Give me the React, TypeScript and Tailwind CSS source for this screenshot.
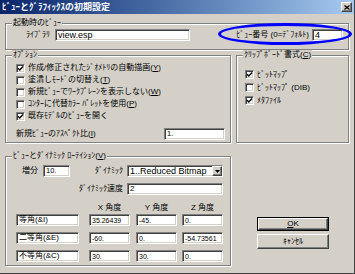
import { ReactNode } from "react";

const sunken =
    "bg-white border border-t-[#808080] border-l-[#808080] border-r-white border-b-white shadow-[inset_1px_1px_0_#404040,inset_-1px_-1px_0_#d4d0c8]";
const raised =
    "bg-[#d4d0c8] border border-t-white border-l-white border-r-[#404040] border-b-[#404040] shadow-[inset_-1px_-1px_0_#808080]";
const frame =
    "border border-[#808080] shadow-[inset_1px_1px_0_#fff,1px_1px_0_#fff] min-w-0";

function Box({ className = "", children }: { className?: string; children?: ReactNode }) {
    return (
        <div className={`${sunken} h-[12px] flex items-center pl-[2px] leading-none overflow-hidden whitespace-nowrap ${className}`}>
            {children}
        </div>
    );
}

function Check({ on }: { on: boolean }) {
    return (
        <div className={`${sunken} w-[9px] h-[9px] shrink-0 flex items-center justify-center`}>
            {on && (
                <svg width="7" height="7" viewBox="0 0 7 7">
                    <path d="M1 3.2 L2.8 5 L6 1.6" stroke="#000" strokeWidth="1.4" fill="none" />
                </svg>
            )}
        </div>
    );
}

function Legend({ children }: { children: ReactNode }) {
    return <legend className="ml-[6px] px-[1px] bg-[#d4d0c8] text-[8px] leading-[10px]">{children}</legend>;
}

function Opt({ on, children, h = "h-[12px]" }: { on: boolean; children: ReactNode; h?: string }) {
    return (
        <div className={`flex items-center ${h}`}>
            <Check on={on} />
            <span className="ml-[3px] whitespace-nowrap">{children}</span>
        </div>
    );
}

const rows = [
    { label: "等角(&I)", x: "35.26439", y: "-45.", z: "0." },
    { label: "二等角(&E)", x: "-60.", y: "0.", z: "-54.73561" },
    { label: "不等角(&C)", x: "30.", y: "30.", z: "0." },
];

export default function App() {
    return (
        <div className="relative w-[355px] h-[274px] overflow-hidden bg-[#d4d0c8] flex flex-col border-r border-b border-[#404040] text-black text-[8px] leading-[10px] font-['Liberation_Sans','Noto_Sans_CJK_JP',sans-serif]">
            {/* title bar */}
            <div className="h-[14px] shrink-0 flex items-center bg-linear-to-r from-[#0a246a] to-[#a6caf0]">
                <span className="pl-[2px] text-white font-bold text-[9px] whitespace-nowrap">
                    ﾋﾞｭｰとｸﾞﾗﾌｨｯｸｽの初期設定
                </span>
                <div className={`ml-auto mr-[2px] w-[11px] h-[10px] ${raised} flex items-center justify-center`}>
                    <svg width="6" height="5" viewBox="0 0 6 5">
                        <path d="M0.5 0.5 L5.5 4.5 M5.5 0.5 L0.5 4.5" stroke="#000" strokeWidth="1.3" />
                    </svg>
                </div>
            </div>

            <div className="flex-1 flex flex-col pl-[5px] pr-[5px] pt-[4px]">
                <fieldset className={frame}>
                    <Legend>起動時のﾋﾞｭｰ</Legend>
                    <div className="flex items-center pt-[1px] pb-[8px] pl-[20px] pr-[5px]">
                        <span>ﾗｲﾌﾞﾗﾘ</span>
                        <Box className="ml-[5px] w-[135px] text-[9px]">view.esp</Box>
                        <span className="ml-auto whitespace-nowrap">ﾋﾞｭｰ番号 (0=ﾃﾞﾌｫﾙﾄ)</span>
                        <Box className="ml-[3px] w-[31px] text-[9px]">4</Box>
                    </div>
                </fieldset>

                <div className="flex gap-[5px]">
                    <fieldset className={`${frame} w-[226px] shrink-0`}>
                        <Legend>ｵﾌﾟｼｮﾝ</Legend>
                        <div className="flex flex-col pt-[2px] pb-[2px] pl-[10px]">
                            <Opt on>
                                作成/修正されたｼﾞｵﾒﾄﾘの自動描画(<span className="underline">Y</span>)
                            </Opt>
                            <Opt on={false}>
                                塗潰しﾓｰﾄﾞの切替え(<span className="underline">T</span>)
                            </Opt>
                            <Opt on={false}>
                                新規ﾋﾞｭｰでﾜｰｸﾌﾟﾚｰﾝを表示しない(<span className="underline">W</span>)
                            </Opt>
                            <Opt on={false}>
                                ｺﾝﾀｰに代替ｶﾗｰ ﾊﾟﾚｯﾄを使用(<span className="underline">P</span>)
                            </Opt>
                            <Opt on>既存ﾓﾃﾞﾙのﾋﾞｭｰを開く</Opt>
                            <div className="flex items-center h-[12px] mt-[6px]">
                                <span className="whitespace-nowrap">
                                    新規ﾋﾞｭｰのｱｽﾍﾟｸﾄ比(<span className="underline">I</span>)
                                </span>
                                <Box className="ml-auto mr-[5px] w-[61px] h-[11px] text-[7.5px]">1.</Box>
                            </div>
                        </div>
                    </fieldset>

                    <fieldset className={`${frame} flex-1`}>
                        <Legend>
                            ｸﾘｯﾌﾟﾎﾞｰﾄﾞ書式(<span className="underline">C</span>)
                        </Legend>
                        <div className="flex flex-col pt-[8px] pl-[8px]">
                            <Opt on h="h-[13px]">ﾋﾞｯﾄﾏｯﾌﾟ</Opt>
                            <Opt on={false} h="h-[13px]">ﾋﾞｯﾄﾏｯﾌﾟ (DIB)</Opt>
                            <Opt on h="h-[13px]">ﾒﾀﾌｧｲﾙ</Opt>
                        </div>
                    </fieldset>
                </div>

                <div className="flex mt-[8px]">
                    <fieldset className={`${frame} w-[226px] shrink-0`}>
                        <Legend>
                            ﾋﾞｭｰとﾀﾞｲﾅﾐｯｸ ﾛｰﾃｲｼｮﾝ(<span className="underline">V</span>)
                        </Legend>
                        <div className="flex flex-col pt-[4px] pb-[3px]">
                            <div className="flex items-center h-[12px]">
                                <span className="ml-[16px] w-[21px]">増分</span>
                                <Box className="w-[27px] text-[7.5px]">10.</Box>
                                <span className="w-[55px] text-right pr-[2px]">ﾀﾞｲﾅﾐｯｸ</span>
                                <div className={`${sunken} ml-[2px] w-[96px] h-[12px] flex items-center`}>
                                    <span className="pl-[2px] text-[9px] leading-none flex-1 whitespace-nowrap">
                                        1..Reduced Bitmap
                                    </span>
                                    <div className={`${raised} w-[10px] h-full flex items-center justify-center`}>
                                        <svg width="5" height="3" viewBox="0 0 5 3">
                                            <path d="M0 0 L5 0 L2.5 3 Z" fill="#000" />
                                        </svg>
                                    </div>
                                </div>
                            </div>
                            <div className="flex items-center h-[12px] mt-[6px]">
                                <span className="w-[119px] text-right pr-[2px] whitespace-nowrap">ﾀﾞｲﾅﾐｯｸ速度</span>
                                <Box className="ml-[2px] w-[96px] text-[8px]">2</Box>
                            </div>
                            <div className="flex items-center h-[10px] mt-[8px] pl-[10px]">
                                <span className="w-[63px]" />
                                <span className="ml-[10px] w-[41px] text-center">X 角度</span>
                                <span className="ml-[6px] w-[41px] text-center">Y 角度</span>
                                <span className="ml-[5px] w-[41px] text-center">Z 角度</span>
                            </div>
                            {rows.map((r, i) => (
                                <div key={r.label} className={`flex items-center pl-[10px] ${i === 0 ? "mt-[1px]" : "mt-[6px]"}`}>
                                    <Box className="w-[63px] text-[8px]">{r.label}</Box>
                                    <Box className="ml-[10px] w-[41px] text-[7px]">{r.x}</Box>
                                    <Box className="ml-[6px] w-[41px] text-[7px]">{r.y}</Box>
                                    <Box className="ml-[5px] w-[41px] text-[7px]">{r.z}</Box>
                                </div>
                            ))}
                        </div>
                    </fieldset>

                    <div className="flex flex-col pt-[66px] pl-[26px]">
                        <div className="w-[72px] h-[14px] border border-black">
                            <div className={`${raised} w-full h-full flex items-center justify-center`}>
                                <span>
                                    <span className="underline">O</span>K
                                </span>
                            </div>
                        </div>
                        <div className={`${raised} mt-[3px] w-[72px] h-[15px] flex items-center justify-center`}>
                            ｷｬﾝｾﾙ
                        </div>
                    </div>
                </div>
            </div>

            {/* highlight ellipse */}
            <div className="absolute left-[218px] top-[23px] w-[134px] h-[22px] rounded-[50%] border-[3px] border-[#0000ff]" />
        </div>
    );
}
